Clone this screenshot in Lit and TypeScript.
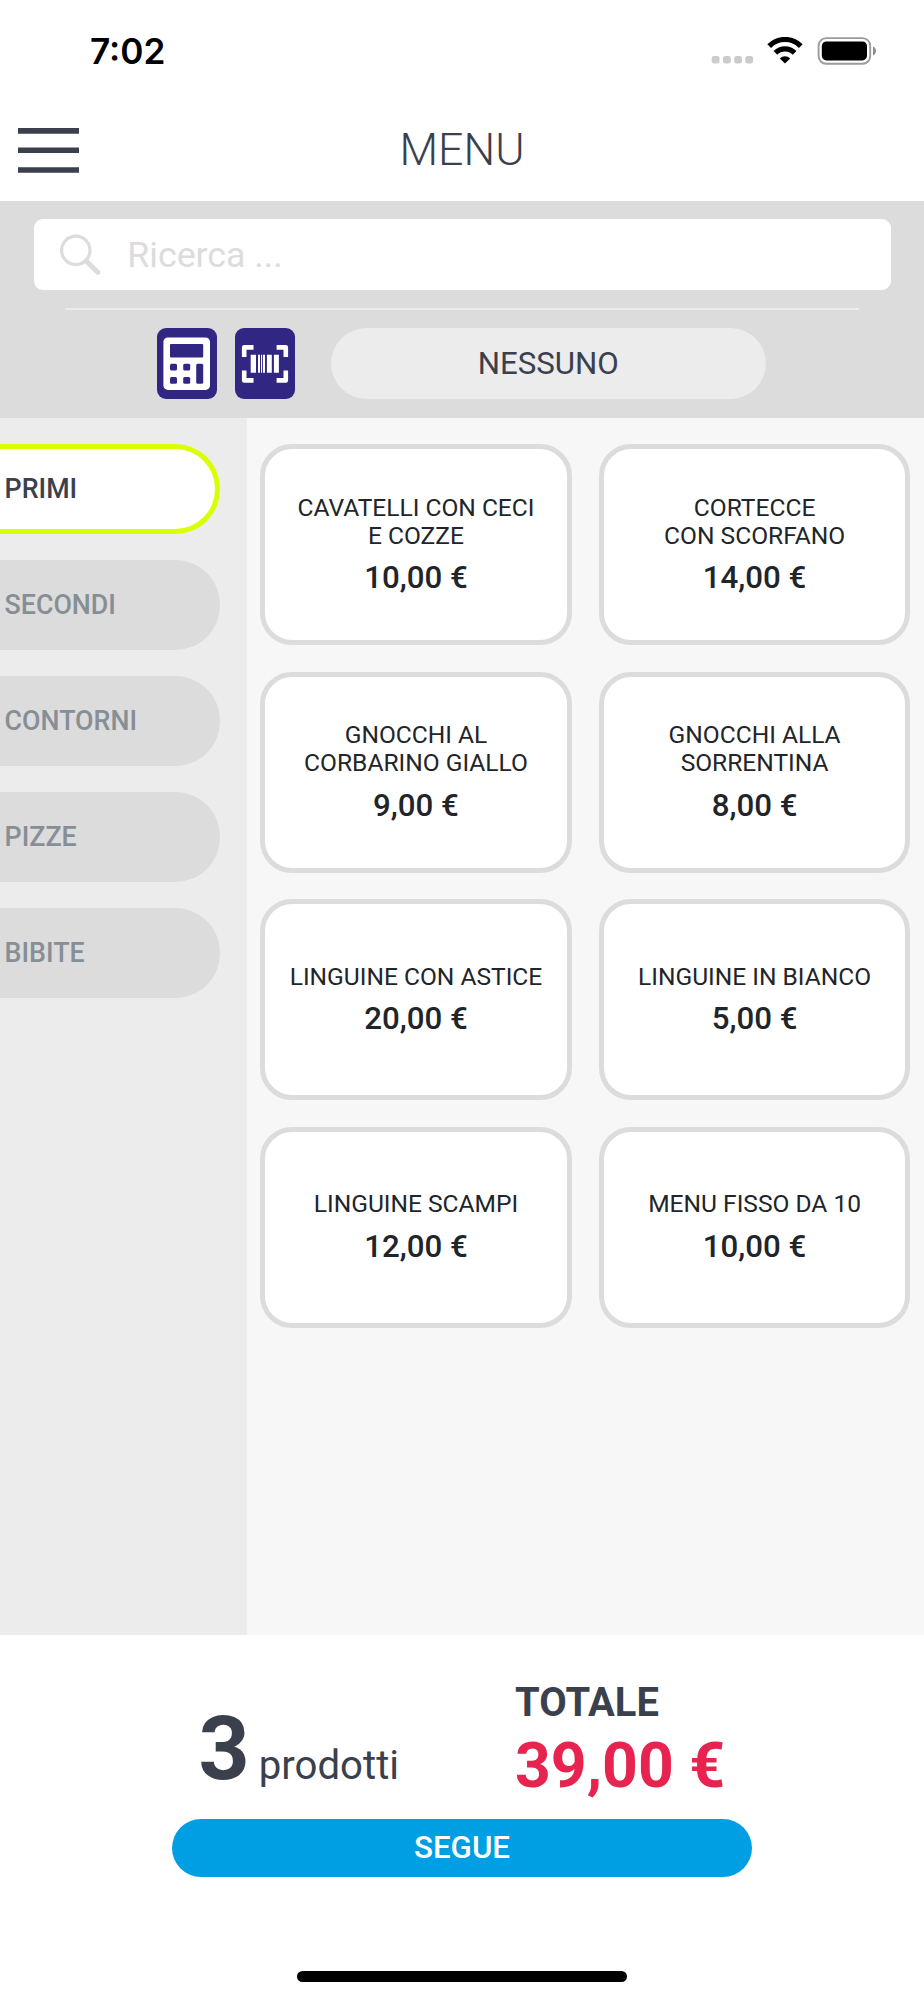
import { LitElement, html, css, svg } from "lit";
import { classMap } from "lit/directives/class-map.js";

interface Dish {
  name: string;
  price: string;
}

const categories = ["PRIMI", "SECONDI", "CONTORNI", "PIZZE", "BIBITE"];

const dishes: Dish[] = [
  { name: "CAVATELLI CON CECI\nE COZZE", price: "10,00 €" },
  { name: "CORTECCE\nCON SCORFANO", price: "14,00 €" },
  { name: "GNOCCHI AL\nCORBARINO GIALLO", price: "9,00 €" },
  { name: "GNOCCHI ALLA\nSORRENTINA", price: "8,00 €" },
  { name: "LINGUINE CON ASTICE", price: "20,00 €" },
  { name: "LINGUINE IN BIANCO", price: "5,00 €" },
  { name: "LINGUINE SCAMPI", price: "12,00 €" },
  { name: "MENU FISSO DA 10", price: "10,00 €" },
];

class StatusBar extends LitElement {
  static styles = css`
    :host {
      display: flex;
      align-items: center;
      justify-content: space-between;
      height: 98px;
      padding: 3px 48px 0 90px;
      box-sizing: border-box;
      font: 600 35.2px/44px Inter, sans-serif;
      color: #000;
    }
    svg { display: block; }
  `;
  render() {
    return html`
      <span>7:02</span>
      <svg width="166" height="28" viewBox="0 0 166 28">
        <g fill="#cbcbcb">
          ${[1.7, 13, 24.2, 35.3].map((x) => svg`<rect x=${x} y="19" width="7.8" height="7.6" rx="2.4"/>`)}
        </g>
        <g fill="none" stroke="#000" stroke-width="5.2">
          <path d="M59.2 9.1a22.2 22.2 0 0 1 31.6 0"/>
          <path d="M65.4 15.8a13.6 13.6 0 0 1 19.2 0"/>
        </g>
        <path d="M75 26.6l-5.2-5.2a7.6 7.6 0 0 1 10.400 0z"/>
        <rect x="108.600" y="1.100" width="51.600" height="25.600" rx="7.600" fill="none" stroke="#9b9b9b" stroke-width="1.900"/>
        <rect x="111.800" y="4.400" width="45.200" height="19" rx="4.600"/>
        <path d="M163 9.600c4 1.500 4 7.300 0 8.800z" fill="#8e8e8e"/>
      </svg>`;
  }
}
customElements.define("status-bar", StatusBar);

class AppRoot extends LitElement {
  static styles = css`
    :host {
      display: flex;
      flex-direction: column;
      width: 924px;
      height: 2000px;
      overflow: hidden;
      background: #fff;
      font-family: Roboto, sans-serif;
      color: #3b404d;
    }
    svg { display: block; }
    header {
      display: grid;
      grid-template-columns: 1fr auto 1fr;
      align-items: center;
      height: 103px;
      padding: 1px 18px 0;
      box-sizing: border-box;
    }
    h1 {
      margin: 0;
      font-size: 44.64px;
      font-weight: 300;
      line-height: 52px;
    }
    .tools {
      height: 216.6px;
      padding: 18px 33.5px 0;
      box-sizing: border-box;
      background: #dcdcdc;
    }
    .search {
      display: flex;
      align-items: center;
      gap: 26px;
      height: 71.2px;
      padding-left: 26.8px;
      border-radius: 9px;
      background: #fff;
      color: #dcdcdc;
      font-size: 35.71px;
    }
    .rule {
      height: 2.2px;
      margin: 17.8px 31.5px;
      background: #ececec;
    }
    .actions {
      display: flex;
      height: 71.4px;
      padding-left: 123.5px;
    }
    .square {
      width: 60.3px;
      margin-right: 17.6px;
      border-radius: 9px;
      background: #312783;
    }
    .pill {
      display: flex;
      align-items: center;
      justify-content: center;
      width: 434.6px;
      margin-left: 18.2px;
      border-radius: 38px;
      background: #ececec;
      font-size: 31.25px;
    }
    main {
      display: grid;
      grid-template-columns: 247px 1fr;
      height: 1217px;
    }
    nav {
      display: flex;
      flex-direction: column;
      gap: 26.6px;
      padding: 26.6px 26.6px 0 0;
      background: #ececec;
    }
    .cat {
      display: flex;
      align-items: center;
      height: 89.4px;
      padding-left: 4.6px;
      box-sizing: border-box;
      border-radius: 0 44.7px 44.7px 0;
      background: #dcdcdc;
      color: #868e96;
      font-size: 26.79px;
      font-weight: 500;
    }
    .cat.active {
      border: 5px solid #daff00;
      border-left: 0;
      background: #fff;
      color: #3b404d;
    }
    .dishes {
      display: grid;
      grid-template-columns: 1fr 1fr;
      grid-auto-rows: 201px;
      align-content: start;
      gap: 26.5px 27px;
      padding: 26.6px 13.6px 0 13.2px;
      background: #f7f7f7;
    }
    .dish {
      display: flex;
      flex-direction: column;
      align-items: center;
      justify-content: center;
      gap: 10px;
      box-sizing: border-box;
      border: 5px solid #dcdcdc;
      border-radius: 32px;
      background: #fff;
      color: #212529;
      text-align: center;
    }
    .name {
      font-size: 24.55px;
      line-height: 28.2px;
      white-space: pre-line;
    }
    .price {
      font-size: 31.25px;
      font-weight: 500;
      line-height: 35.4px;
    }
    footer {
      display: flex;
      flex-direction: column;
      align-items: center;
      flex: 1;
      padding: 48.4px 0 18px;
      box-sizing: border-box;
    }
    .summary {
      display: grid;
      grid-template-columns: 316.5px 1fr;
      width: 100%;
      height: 136px;
      padding-left: 198.5px;
      box-sizing: border-box;
    }
    .count {
      display: flex;
      align-items: baseline;
      gap: 9px;
      padding-top: 13px;
      font-size: 40.18px;
    }
    .count b {
      font-size: 89.3px;
      font-weight: 700;
      line-height: 105px;
    }
    .label {
      font-size: 39.9px;
      font-weight: 700;
      line-height: 40px;
    }
    .amount {
      margin-top: 11.5px;
      color: #e6244f;
      font-size: 62.5px;
      font-weight: 700;
      line-height: 63px;
    }
    .next {
      display: flex;
      align-items: center;
      justify-content: center;
      width: 580px;
      height: 58px;
      border-radius: 29px;
      background: #009fe3;
      color: #fff;
      font-size: 31.25px;
      font-weight: 500;
    }
    .home {
      width: 330px;
      height: 11.2px;
      margin-top: auto;
      border-radius: 6px;
      background: #000;
    }
  `;

  render() {
    return html`
      <status-bar></status-bar>
      <header>
        <svg width="61" height="45" viewBox="0 0 61 45" fill="#3b404d">
          <path d="M0 0h61v5.7H0zM0 19.6h61v5.5H0zM0 39.3h61v5.5H0z"/>
        </svg>
        <h1>MENU</h1>
      </header>
      <section class="tools">
        <div class="search">
          <svg width="41" height="42" viewBox="0 0 41 42" fill="none" stroke="#dcdcdc">
            <circle cx="15.8" cy="16.4" r="14.2" stroke-width="3.2"/>
            <path d="M26.4 27.2L37.8 38.3" stroke-width="5" stroke-linecap="round"/>
          </svg>
          <span>Ricerca ...</span>
        </div>
        <div class="rule"></div>
        <div class="actions">
          <div class="square">
            <svg width="60" height="71" viewBox="0 0 60 71">
              <rect x="6.4" y="9.5" width="46.6" height="52.4" rx="4.5" fill="#fff"/>
              <g fill="#312783">
                <rect x="13" y="16" width="33.2" height="13.4" rx="1"/>
                <rect x="13" y="35.8" width="7" height="6.8" rx="1.5"/>
                <rect x="26.2" y="35.8" width="7" height="6.8" rx="1.5"/>
                <rect x="13" y="49" width="7" height="6.8" rx="1.5"/>
                <rect x="26.2" y="49" width="7" height="6.8" rx="1.5"/>
                <rect x="39.2" y="35.8" width="7" height="20" rx="1.5"/>
              </g>
            </svg>
          </div>
          <div class="square">
            <svg width="60" height="71" viewBox="0 0 60 71" fill="#fff">
              <g fill="none" stroke="#fff" stroke-width="4.6" stroke-linejoin="round">
                <path d="M9.2 29V19.400H18.500M41.600 19.400H50.800V29M50.800 42.500V52.400H41.600M18.500 52.400H9.200V42.500"/>
              </g>
              <path d="M15.700 26.800h5.300v18h-5.300zM23 26.800h2v18h-2zM26 26.800h1.100v18h-1.100zM28 26.800h2v18h-2zM31.900 26.800h4.900v18h-4.900zM38.900 26.800h5v18h-5z"/>
            </svg>
          </div>
          <div class="pill">NESSUNO</div>
        </div>
      </section>
      <main>
        <nav>
          ${categories.map((c, i) => html`<div class=${classMap({ cat: true, active: i === 0 })}>${c}</div>`)}
        </nav>
        <div class="dishes">
          ${dishes.map((d) => html`<div class="dish"><div class="name">${d.name}</div><div class="price">${d.price}</div></div>`)}
        </div>
      </main>
      <footer>
        <div class="summary">
          <div class="count"><b>3</b><span>prodotti</span></div>
          <div>
            <div class="label">TOTALE</div>
            <div class="amount">39,00 €</div>
          </div>
        </div>
        <div class="next">SEGUE</div>
        <div class="home"></div>
      </footer>`;
  }
}
customElements.define("app-root", AppRoot);
